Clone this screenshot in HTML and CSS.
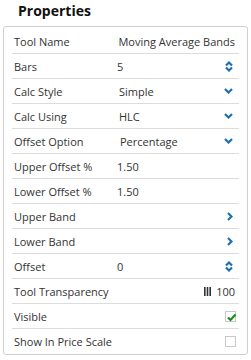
FILE: index.html
```html
<!DOCTYPE html>
<html>
<head>
<meta charset="utf-8">
<link rel="stylesheet" href="styles.css">
</head>
<body>
<h1 class="title">Properties</h1>
<div class="panel">
  <div class="row"><span class="label">Tool Name</span><span class="value right">Moving Average Bands</span></div>
  <div class="row"><span class="label">Bars</span><span class="value">5</span>
    <svg class="icon" width="8" height="11" viewBox="0 0 8 11"><path d="M1 4.5 L4 1.5 L7 4.5 M1 6.5 L4 9.5 L7 6.5" fill="none" stroke="#1f6fb2" stroke-width="2.2"/></svg></div>
  <div class="row"><span class="label">Calc Style</span><span class="value sel">Simple</span>
    <svg class="icon" width="9" height="6" viewBox="0 0 9 6"><path d="M1 1 L4.5 4.5 L8 1" fill="none" stroke="#1f6fb2" stroke-width="2.2"/></svg></div>
  <div class="row"><span class="label">Calc Using</span><span class="value sel">HLC</span>
    <svg class="icon" width="9" height="6" viewBox="0 0 9 6"><path d="M1 1 L4.5 4.5 L8 1" fill="none" stroke="#1f6fb2" stroke-width="2.2"/></svg></div>
  <div class="row"><span class="label">Offset Option</span><span class="value sel sel2">Percentage</span>
    <svg class="icon" width="9" height="6" viewBox="0 0 9 6"><path d="M1 1 L4.5 4.5 L8 1" fill="none" stroke="#1f6fb2" stroke-width="2.2"/></svg></div>
  <div class="row"><span class="label">Upper Offset %</span><span class="value">1.50</span></div>
  <div class="row"><span class="label">Lower Offset %</span><span class="value">1.50</span></div>
  <div class="row"><span class="label">Upper Band</span><span class="value"></span>
    <svg class="icon" width="6" height="9" viewBox="0 0 6 9"><path d="M1 1 L4.5 4.5 L1 8" fill="none" stroke="#1f6fb2" stroke-width="2.2"/></svg></div>
  <div class="row"><span class="label">Lower Band</span><span class="value"></span>
    <svg class="icon" width="6" height="9" viewBox="0 0 6 9"><path d="M1 1 L4.5 4.5 L1 8" fill="none" stroke="#1f6fb2" stroke-width="2.2"/></svg></div>
  <div class="row"><span class="label">Offset</span><span class="value">0</span>
    <svg class="icon" width="8" height="11" viewBox="0 0 8 11"><path d="M1 4.5 L4 1.5 L7 4.5 M1 6.5 L4 9.5 L7 6.5" fill="none" stroke="#1f6fb2" stroke-width="2.2"/></svg></div>
  <div class="row"><span class="label">Tool Transparency</span>
    <span class="trans"><svg width="7" height="9" viewBox="0 0 7 9"><rect x="0" y="0" width="1.6" height="9" fill="#333"/><rect x="2.7" y="0" width="1.6" height="9" fill="#333"/><rect x="5.4" y="0" width="1.6" height="9" fill="#333"/></svg><span>100</span></span></div>
  <div class="row"><span class="label">Visible</span><span class="value"></span>
    <span class="check"><svg width="11" height="11" viewBox="0 0 11 11"><path d="M2 5.5 L4.5 8 L9.5 2.5" fill="none" stroke="#1e8a1e" stroke-width="2.2"/></svg></span></div>
  <div class="row last"><span class="label">Show In Price Scale</span><span class="value"></span>
    <span class="check"></span></div>
</div>
</body>
</html>
```
FILE: styles.css
```css
html, body {
  margin: 0;
  padding: 0;
  background: #fff;
}
body {
  font-family: "Open Sans", "Liberation Sans", sans-serif;
  color: #333;
  padding: 0 3px;
}
.title {
  margin: 0;
  padding: 0 0 0 15px;
  font-size: 14px;
  font-weight: 700;
  color: #111;
  line-height: 22px;
  height: 26px;
}
.panel {
  width: 243px;
  border: 1px solid #cfcfcf;
  border-radius: 3px;
  padding: 2px 8px 0 8px;
  box-sizing: border-box;
  width: 245px;
}
.row {
  display: flex;
  align-items: center;
  height: 25px;
  border-bottom: 1px solid #dcdcdc;
  box-sizing: border-box;
  font-size: 11px;
  padding: 0 2px;
}
.row.last {
  border-bottom: none;
}
.label {
  width: 103px;
  flex: none;
}
.value {
  flex: 1;
}
.value.sel {
  padding-left: 2px;
}
.value.sel2 {
  padding-left: 3px;
}
.value.right {
  text-align: right;
  padding-right: 2px;
}
.icon {
  flex: none;
  margin-right: 4px;
}
.trans {
  margin-left: auto;
  display: flex;
  align-items: center;
  gap: 5px;
  margin-right: 2px;
}
.check {
  flex: none;
  width: 11px;
  height: 11px;
  border: 1px solid #c8c8c8;
  box-sizing: border-box;
  margin-right: 1px;
  display: flex;
  align-items: center;
  justify-content: center;
  position: relative;
}
.check svg {
  position: absolute;
  left: 0;
  top: 0;
}
```
